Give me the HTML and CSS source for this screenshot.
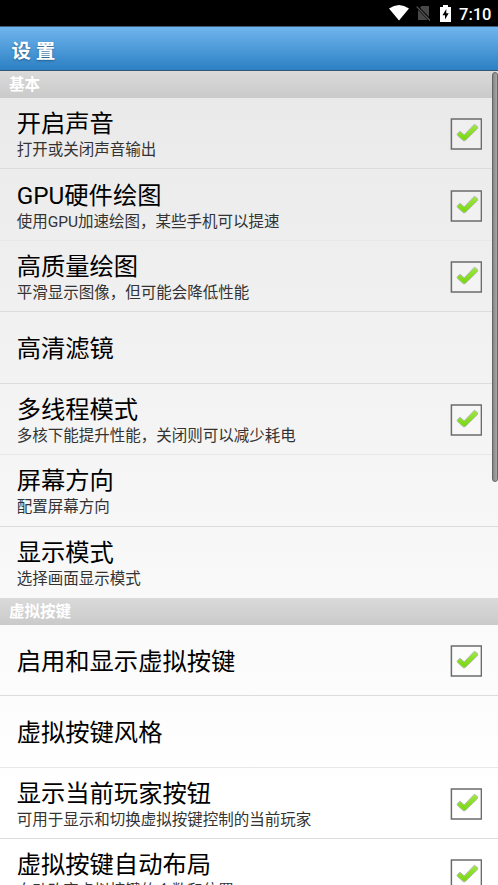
FILE: index.html
```html
<!DOCTYPE html>
<html lang="zh-CN">
<head>
<meta charset="utf-8">
<title>设置</title>
<link rel="stylesheet" href="styles.css">
</head>
<body>
<svg width="0" height="0" class="defs">
  <defs>
    <linearGradient id="green" x1="0" y1="0" x2="0" y2="1"><stop offset="0" stop-color="#a0e548"/><stop offset="1" stop-color="#76d80c"/></linearGradient>
    <symbol id="check" viewBox="0 0 32 32">
      <rect x="1.4" y="1" width="30" height="30" fill="#fff" fill-opacity=".25" stroke="#6b6b6b" stroke-width="1.5"/>
      <path d="M7.2 15.8 10 13.2 14.2 16.8 24.4 6.2 27.6 8.6V10.6L15 22.8H13.4L7.2 17.2Z" fill="url(#green)" stroke="#b9bcb6" stroke-width="1" stroke-linejoin="round"/>
    </symbol>
  </defs>
</svg>
<div class="status">
  <svg class="wifi" viewBox="0 0 20 16"><path d="M0 3.5Q10-3.5 20 3.5L10 15.5Z" fill="#fff"/></svg>
  <svg class="sim" viewBox="0 0 15 16"><path d="M5.5 1H13V12L4 2.7ZM2 5 11.5 15H2Z" fill="#484848"/><path d="M2 4H5L13 13V15H2Z" fill="#484848"/><path d="M.7 1.7 14 15.5" stroke="#000" stroke-width="2.4"/><path d="M.7 1.7 14 15.5" stroke="#5a5a5a" stroke-width="1.2"/></svg>
  <svg class="battery" viewBox="0 0 11 17"><path d="M3 0H8V2H11V17H0V2H3Z" fill="#fff"/><path d="M6.3 4 2.5 10.3H5V14.5L8.7 8.3H6.3Z" fill="#000"/></svg>
  <span class="clock">7:10</span>
</div>
<header class="bar">设 置</header>
<main class="list">
  <h2 class="section">基本</h2>
  <div class="row"><div class="text"><div class="title">开启声音</div><div class="sub">打开或关闭声音输出</div></div><svg class="check"><use href="#check"/></svg></div>
  <div class="row faint"><div class="text"><div class="title">GPU硬件绘图</div><div class="sub">使用GPU加速绘图，某些手机可以提速</div></div><svg class="check"><use href="#check"/></svg></div>
  <div class="row"><div class="text"><div class="title">高质量绘图</div><div class="sub">平滑显示图像，但可能会降低性能</div></div><svg class="check"><use href="#check"/></svg></div>
  <div class="row"><div class="text single"><div class="title">高清滤镜</div></div></div>
  <div class="row faint"><div class="text"><div class="title">多线程模式</div><div class="sub">多核下能提升性能，关闭则可以减少耗电</div></div><svg class="check"><use href="#check"/></svg></div>
  <div class="row"><div class="text"><div class="title">屏幕方向</div><div class="sub">配置屏幕方向</div></div></div>
  <div class="row last"><div class="text"><div class="title">显示模式</div><div class="sub">选择画面显示模式</div></div></div>
  <h2 class="section">虚拟按键</h2>
  <div class="row"><div class="text single"><div class="title">启用和显示虚拟按键</div></div><svg class="check"><use href="#check"/></svg></div>
  <div class="row faint"><div class="text single"><div class="title">虚拟按键风格</div></div></div>
  <div class="row"><div class="text"><div class="title">显示当前玩家按钮</div><div class="sub">可用于显示和切换虚拟按键控制的当前玩家</div></div><svg class="check"><use href="#check"/></svg></div>
  <div class="row"><div class="text"><div class="title">虚拟按键自动布局</div><div class="sub">自动改变虚拟按键的个数和位置</div></div><svg class="check"><use href="#check"/></svg></div>
  <div class="thumb"></div>
</main>
</body>
</html>
```
FILE: styles.css
```css
* { box-sizing: border-box; }
body {
  margin: 0;
  height: 885px;
  overflow: hidden;
  display: flex;
  flex-direction: column;
  font-family: Roboto, "Noto Sans CJK SC", sans-serif;
  background: #fff;
}
.defs { position: absolute; }
.status {
  height: 26px;
  flex: none;
  background: #000;
  display: flex;
  align-items: center;
  justify-content: flex-end;
  padding-right: 9px;
  color: #fff;
}
.wifi { width: 20px; height: 16px; margin-right: 7px; }
.sim { width: 15px; height: 16px; margin-right: 9px; }
.battery { width: 11px; height: 17px; margin-right: 8px; }
.clock { font-size: 16.5px; font-weight: 500; line-height: 26px; width: 30px; white-space: nowrap; padding-top: 3px; }
.bar {
  height: 45px;
  flex: none;
  padding-left: 11.5px;
  border-top: 1px solid #3c5c78;
  border-bottom: 1px solid #34566f;
  background: linear-gradient(#70b5ee, #2b80c3);
  color: #fff;
  font-size: 19.5px;
  font-weight: 700;
  line-height: 49px;
  text-shadow: 0 1px 2px rgba(0, 0, 0, .35);
}
.list {
  position: relative;
  flex: 1;
  min-height: 0;
  overflow: hidden;
  background: linear-gradient(#e9e9e9, #fff 88%);
}
.section {
  margin: 0;
  height: 27px;
  padding-left: 9px;
  background: linear-gradient(#dadada, #cacaca);
  color: #fff;
  font-size: 15.5px;
  font-weight: 700;
  line-height: 28px;
}
.row {
  height: 71.43px;
  display: flex;
  align-items: center;
  justify-content: space-between;
  padding: 1px 16px 0 16.7px;
  background: linear-gradient(#dcdcdc, #dcdcdc) bottom / 100% 1px no-repeat;
}
.faint { background-image: linear-gradient(#e8e8e8, #e8e8e8); }
.last { background: none; }
.text { padding-top: 2px; }
.single { padding-top: 0; }
.title { font-size: 24.3px; line-height: 29px; color: #000; white-space: nowrap; }
.sub { font-size: 15.5px; line-height: 22px; padding-top: 1px; color: #333; white-space: nowrap; }
.check { width: 32px; height: 32px; flex: none; }
.thumb {
  position: absolute;
  top: 1px;
  right: 0;
  width: 6px;
  height: 410px;
  border: 1px solid #666;
  border-radius: 3px;
  background: linear-gradient(90deg, #858585, #a9a9a9);
}
```
